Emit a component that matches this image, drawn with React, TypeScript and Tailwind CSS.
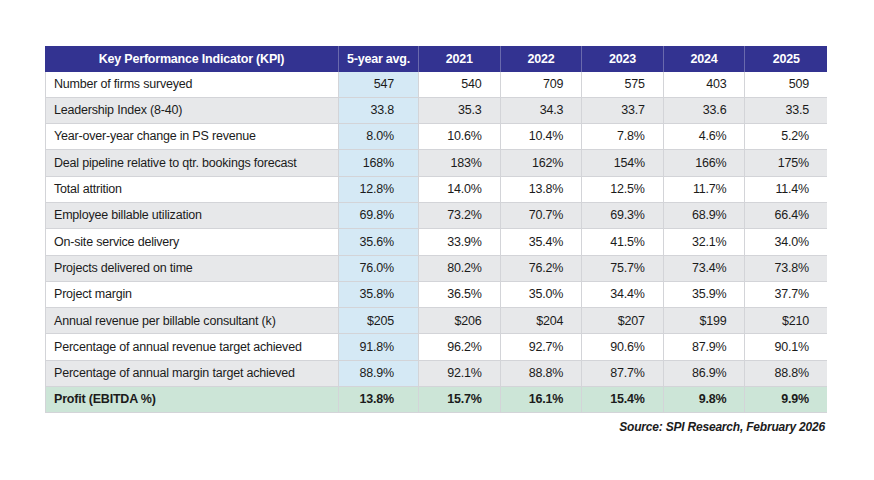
import React from "react";

const rows: [string, string, string, string, string, string, string][] = [
  ["Number of firms surveyed", "547", "540", "709", "575", "403", "509"],
  ["Leadership Index (8-40)", "33.8", "35.3", "34.3", "33.7", "33.6", "33.5"],
  ["Year-over-year change in PS revenue", "8.0%", "10.6%", "10.4%", "7.8%", "4.6%", "5.2%"],
  ["Deal pipeline relative to qtr. bookings forecast", "168%", "183%", "162%", "154%", "166%", "175%"],
  ["Total attrition", "12.8%", "14.0%", "13.8%", "12.5%", "11.7%", "11.4%"],
  ["Employee billable utilization", "69.8%", "73.2%", "70.7%", "69.3%", "68.9%", "66.4%"],
  ["On-site service delivery", "35.6%", "33.9%", "35.4%", "41.5%", "32.1%", "34.0%"],
  ["Projects delivered on time", "76.0%", "80.2%", "76.2%", "75.7%", "73.4%", "73.8%"],
  ["Project margin", "35.8%", "36.5%", "35.0%", "34.4%", "35.9%", "37.7%"],
  ["Annual revenue per billable consultant (k)", "$205", "$206", "$204", "$207", "$199", "$210"],
  ["Percentage of annual revenue target achieved", "91.8%", "96.2%", "92.7%", "90.6%", "87.9%", "90.1%"],
  ["Percentage of annual margin target achieved", "88.9%", "92.1%", "88.8%", "87.7%", "86.9%", "88.8%"],
];
const profit = ["Profit (EBITDA %)", "13.8%", "15.7%", "16.1%", "15.4%", "9.8%", "9.9%"];
const headers = ["Key Performance Indicator (KPI)", "5-year avg.", "2021", "2022", "2023", "2024", "2025"];

export default function App() {
  return (
    <div
      className="w-[874px] h-[480px] bg-white text-[#1b1b1b] tracking-[-0.2px]"
      style={{ fontFamily: '"Liberation Sans", Arial, sans-serif' }}
    >
      <div className="pt-[46px] pl-[45px]">
        <div className="w-[782px] grid grid-cols-[294px_80px_repeat(5,1fr)] text-[12.5px] leading-none">
          {headers.map((h, i) => (
            <div
              key={h}
              className={`h-[25.5px] bg-[#333391] text-white font-bold flex items-center justify-center ${
                i < 6 ? "border-r border-[#6a6aad]" : ""
              }`}
            >
              {h}
            </div>
          ))}
          {rows.map((r, ri) => {
            const bg = ri % 2 === 0 ? "bg-white" : "bg-[#e7e8ea]";
            return r.map((c, ci) => (
              <div
                key={ri + "-" + ci}
                className={`h-[26.3px] flex items-center border-b border-[#d3d4d8] ${
                  ci === 0
                    ? `${bg} pl-[8px] border-r border-l`
                    : ci === 1
                    ? "bg-[#d5e9f5] justify-end pr-[24px] border-r"
                    : `${bg} justify-end pr-[18px] ${ci < 6 ? "border-r" : ""}`
                }`}
              >
                {c}
              </div>
            ));
          })}
          {profit.map((c, ci) => (
            <div
              key={"p" + ci}
              className={`h-[26.3px] flex items-center bg-[#cce5d7] font-bold border-b border-[#d3d4d8] ${
                ci === 0
                  ? "pl-[8px] border-r border-l"
                  : ci === 1
                  ? "justify-end pr-[24px] border-r"
                  : `justify-end pr-[18px] ${ci < 6 ? "border-r" : ""}`
              }`}
            >
              {c}
            </div>
          ))}
        </div>
        <div className="w-[782px] text-right pt-[8px] pr-[2px] text-[12px] leading-none font-bold italic">
          Source: SPI Research, February 2026
        </div>
      </div>
    </div>
  );
}
